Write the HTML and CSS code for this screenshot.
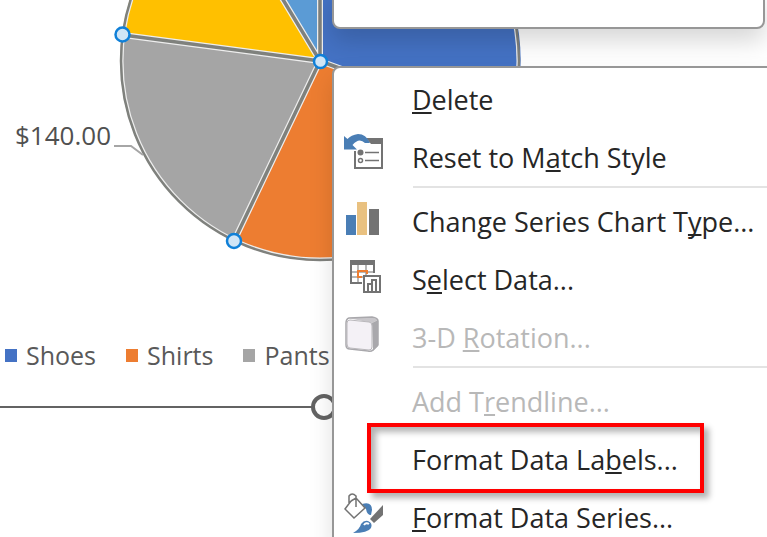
FILE: index.html
```html
<!DOCTYPE html>
<html lang="en">
<head>
    <meta charset="UTF-8">
    <meta name="viewport" content="width=device-width, initial-scale=1.0">
    <title>Pie Chart</title>
    <link rel="stylesheet" href="styles.css">
</head>
<body>
    <main class="chart">
        <div class="plot">
            <svg class="pie" width="540" height="270" viewBox="0 0 540 270" aria-hidden="true">
                <!-- slices -->
                <path fill="#4472c4" d="M320 61V-140A200 200 0 0 1 508 130Z"/>
                <path fill="#ed7d31" d="M320 61L508 130A200 200 0 0 1 234 241Z"/>
                <path fill="#a5a5a5" d="M320 61L234 241A200 200 0 0 1 122 34Z"/>
                <path fill="#ffc000" d="M320 61L122 34A200 200 0 0 1 220-112Z"/>
                <path fill="#5b9bd5" d="M320 61L220-105L320-140Z"/>
                <!-- selection outline -->
                <g fill="none" stroke="#eee" stroke-width="6">
                    <path d="M320-10V61L123 35M320 61L276-12M320 61L234 241M320 61L508 130"/>
                    <circle cx="320" cy="61" r="198" stroke-width="3"/>
                </g>
                <g fill="none" stroke="#7f817d" stroke-width="3.500">
                    <path d="M320-10V61L123 35M320 61L276-12M320 61L234 241M320 61L508 130"/>
                    <circle cx="320" cy="61" r="199" stroke-width="2.500"/>
                </g>
                <path d="M114 146H131L143 155" fill="none" stroke="#a6a6a6" stroke-width="2"/>
                <g fill="#d0e5f6" stroke="#1080d8" stroke-width="2.500">
                    <circle cx="122.500" cy="34.500" r="7"/>
                    <circle cx="320.500" cy="61.500" r="6.500"/>
                    <circle cx="234" cy="241" r="7"/>
                </g>
            </svg>
            <span class="data-label">$140.00</span>
        </div>
        <ul class="legend">
            <li><span class="swatch shoes"></span>Shoes</li>
            <li><span class="swatch shirts"></span>Shirts</li>
            <li><span class="swatch pants"></span>Pants</li>
        </ul>
        <span class="resize-handle"></span>
    </main>

    <div class="mini-toolbar"></div>

    <ul class="context-menu">
        <li><button type="button"><span class="icon"></span><span><u>D</u>elete</span></button></li>
        <li>
            <button type="button">
                <svg class="icon" viewBox="0 0 40 40" aria-hidden="true">
                    <path d="M11 14V31H38V2H24" fill="#fff" stroke="#737373" stroke-width="2"/>
                    <path d="M22 1H39V7H27Z" fill="#737373"/>
                    <circle cx="16.500" cy="15.500" r="3" fill="#737373"/>
                    <circle cx="16.500" cy="23.500" r="2" fill="none" stroke="#737373" stroke-width="1.500"/>
                    <path d="M21 15.500H35M21 23.500H35" stroke="#737373" stroke-width="1.500"/>
                    <path d="M0-1V12.500H13L8.500 8Q15 0 21 6H26Q22-3 14-3Q7-2 3.500 2Z" fill="#4a7eb5"/>
                </svg>
                <span>Reset to M<u>a</u>tch Style</span>
            </button>
        </li>
        <li class="separator"></li>
        <li>
            <button type="button">
                <svg class="icon" viewBox="0 0 40 40" aria-hidden="true">
                    <path d="M2 14H12V34H2Z" fill="#4a7eb5"/>
                    <path d="M13 1H23V34H13Z" fill="#e9c180"/>
                    <path d="M25 8H35V34H25Z" fill="#737373"/>
                </svg>
                <span>Change Series Chart T<u>y</u>pe...</span>
            </button>
        </li>
        <li>
            <button type="button">
                <svg class="icon" viewBox="0 0 40 40" aria-hidden="true">
                    <path d="M14 5V24M22 5V16M7 13H30M7 18H20" stroke="#a0a0a0" stroke-width="1.500"/>
                    <path d="M17 23V24H7V2H30V14" fill="none" stroke="#737373" stroke-width="2"/>
                    <path d="M6 1H31V6H6Z" fill="#737373"/>
                    <path d="M18 18H14V12H23V15" fill="none" stroke="#ed7d31" stroke-width="2"/>
                    <path d="M20 17H36V33H20Z" fill="#fff" stroke="#737373" stroke-width="2"/>
                    <path d="M24 33V25H28V33M28 33V21H32V33" fill="none" stroke="#737373" stroke-width="2"/>
                </svg>
                <span>S<u>e</u>lect Data...</span>
            </button>
        </li>
        <li>
            <button type="button" disabled>
                <svg class="icon" viewBox="0 0 40 40" aria-hidden="true">
                    <path d="M4 1L28 0L34 3L28 6Z" fill="#c8c6ca"/>
                    <path d="M28 6L34 3V29L29 34Z" fill="#a9a8ac"/>
                    <path d="M5 1L28 0Q34 1 34 4V28L29 33Q27 35 24 34L6 32Q2 32 2 28V6Q2 2 5 1Z" fill="none" stroke="#a9a8ac" stroke-width="1.500"/>
                    <path d="M6 3L25 5Q28 5 28 9V30Q28 33 25 33L6 31Q3 31 3 27V6Q3 3 6 3Z" fill="#f4f1f6" stroke="#b9b7bb"/>
                </svg>
                <span>3-D <u>R</u>otation...</span>
            </button>
        </li>
        <li class="separator"></li>
        <li><button type="button" disabled><span class="icon"></span><span>Add T<u>r</u>endline...</span></button></li>
        <li class="highlight"><button type="button"><span class="icon"></span><span>Format Data La<u>b</u>els...</span></button></li>
        <li>
            <button type="button">
                <svg class="icon" viewBox="0 0 40 40" aria-hidden="true">
                    <path d="M18 7Q28 4 28 13L27 18Q23 18 22 12Z" fill="#4a7eb5"/>
                    <path d="M7 4L1 12L10 21L21 11L12 1V-1Q8-5 5-1V7M7 4L12 1V10" fill="none" stroke="#737373" stroke-width="1.500"/>
                    <path d="M39 8V18L30 26L26 22Z" fill="#737373"/>
                    <path d="M24 24Q29 26 27 31Q24 36 9 36Q16 32 17 27Q20 23 24 24Z" fill="#4a7eb5"/>
                    <path d="M20 28Q22 25 25 27" fill="none" stroke="#fff" stroke-width="2"/>
                </svg>
                <span><u>F</u>ormat Data Series...</span>
            </button>
        </li>
    </ul>
</body>
</html>
```
FILE: styles.css
```css
*,
*::after {
    box-sizing: border-box;
}
body {
    margin: 0;
    min-height: 100vh;
    overflow: hidden;
    background-color: #fff;
    font-family: "Open Sans", "Noto Sans", sans-serif;
}
ul {
    list-style: none;
    margin: 0;
    padding: 0;
}
.chart {
    position: relative;
    border-bottom: 2px solid #636363;
    padding-bottom: 35px;
}
.plot {
    position: relative;
}
.pie {
    display: block;
}
.data-label {
    position: absolute;
    left: 15px;
    top: 118px;
    font-size: 26px;
    line-height: 34px;
    color: #505050;
}
.legend {
    display: flex;
    gap: 30px;
    padding: 69px 0 0 5px;
    font-size: 25px;
    line-height: 32px;
    color: #595959;
}
.legend li {
    display: flex;
    align-items: center;
    gap: 9px;
}
.swatch {
    width: 12px;
    height: 13px;
}
.shoes {
    background-color: #4472c4;
}
.shirts {
    background-color: #ed7d31;
}
.pants {
    background-color: #a5a5a5;
}
.resize-handle {
    position: absolute;
    left: 311px;
    bottom: -14px;
    width: 26px;
    height: 26px;
    border: 4px solid #636363;
    border-radius: 50%;
    background-color: #fff;
}
.mini-toolbar {
    position: absolute;
    top: -10px;
    left: 332px;
    right: 2px;
    height: 39px;
    background-color: #fff;
    border: 2px solid #979797;
    border-radius: 8px;
    box-shadow: 0 12px 24px rgba(0, 0, 0, 0.16);
}
.context-menu {
    position: absolute;
    top: 66px;
    left: 332px;
    right: -20px;
    padding: 2px 0;
    background-color: #fff;
    border: 2px solid #979797;
    border-radius: 8px;
    box-shadow: 0 12px 24px rgba(0, 0, 0, 0.12);
}
.context-menu button {
    display: flex;
    align-items: center;
    gap: 28px;
    width: 100%;
    height: 58px;
    padding: 0 10px;
    border: 0;
    background: none;
    font: inherit;
    font-size: 27px;
    color: #262626;
    text-align: left;
    white-space: nowrap;
}
.context-menu button:disabled {
    color: #b8b8b8;
}
.context-menu u {
    text-decoration-thickness: 2px;
    text-underline-offset: 2px;
    text-decoration-skip-ink: none;
}
.icon {
    flex: none;
    width: 40px;
    height: 40px;
    overflow: visible;
}
.separator {
    height: 2px;
    margin: 0 0 4px 79px;
    background-color: #e3e3e3;
}
.highlight {
    position: relative;
}
.highlight::after {
    content: "";
    position: absolute;
    top: -7px;
    left: 33px;
    width: 337px;
    height: 70px;
    border: 4px solid #f00;
    box-shadow: 5px 5px 6px rgba(0, 0, 0, 0.3), inset 5px 5px 6px rgba(0, 0, 0, 0.3);
}
```
